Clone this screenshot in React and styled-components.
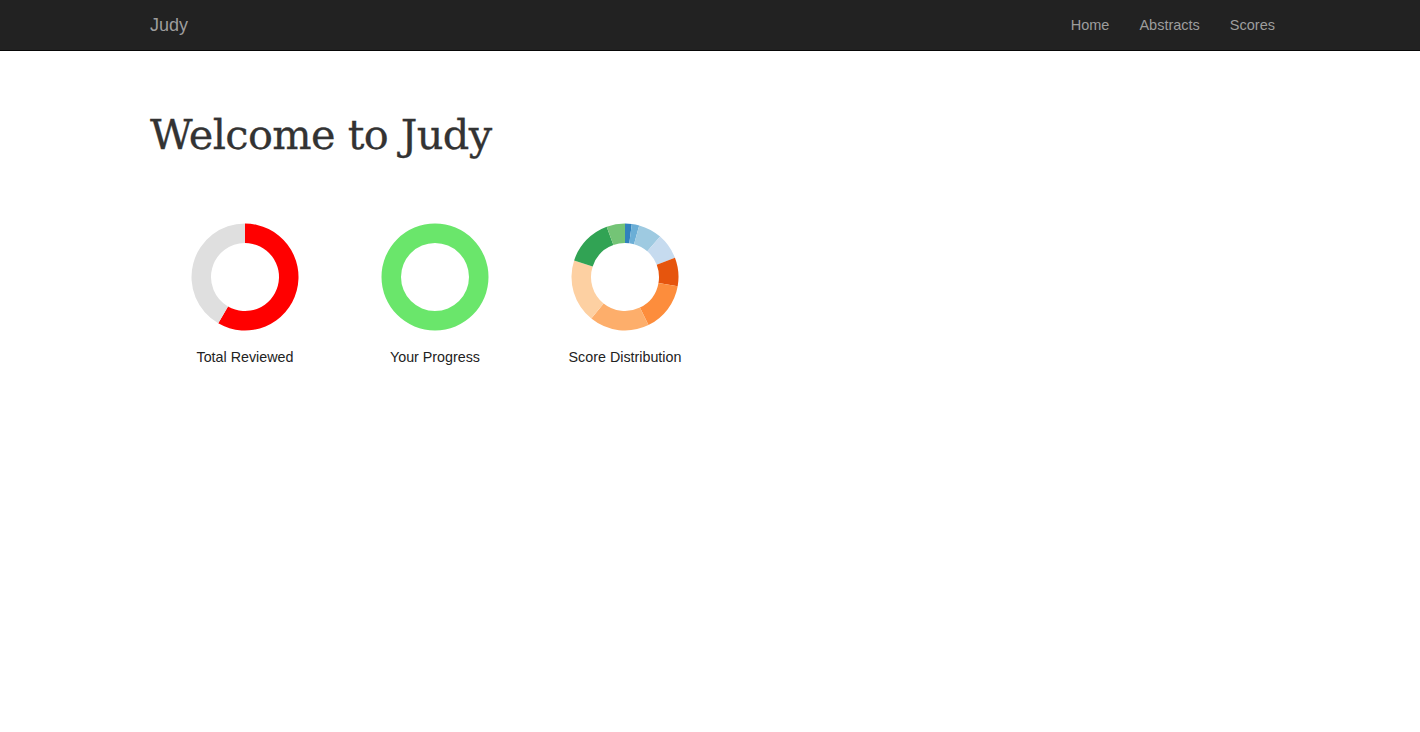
import React from "react";
import styled, { createGlobalStyle } from "styled-components";

const Global = createGlobalStyle`
  html, body { margin: 0; padding: 0; background: #fff; }
  body { font-family: "Liberation Sans", Arial, sans-serif; font-size: 14px; color: #333; }
`;

const Navbar = styled.nav`
  height: 50px;
  background: #222;
  border-bottom: 1px solid #080808;
`;

const NavInner = styled.div`
  width: 1170px;
  margin: 0 auto;
  box-sizing: border-box;
  padding: 0 5px 0 25px;
  height: 50px;
  display: flex;
  align-items: center;
  justify-content: space-between;
`;

const Brand = styled.a`
  font-size: 18px;
  color: #9d9d9d;
  text-decoration: none;
  line-height: 20px;
`;

const NavList = styled.ul`
  list-style: none;
  margin: 0;
  padding: 0;
  display: flex;
`;

const NavLink = styled.a`
  display: block;
  padding: 15px;
  line-height: 20px;
  font-size: 14.5px;
  color: #9d9d9d;
  text-decoration: none;
`;

const Container = styled.main`
  width: 1170px;
  margin: 0 auto;
  box-sizing: border-box;
  padding: 0 25px;
`;

const Title = styled.h1`
  margin: 57px 0 0;
  font-family: "DejaVu Serif", "Liberation Serif", serif;
  font-weight: normal;
  font-size: 41.5px;
  line-height: 54px;
  color: #333;
  letter-spacing: -0.6px;
  -webkit-text-stroke: 0.3px #333;
`;

const Charts = styled.div`
  display: flex;
  margin-top: 61px;
`;

const Tile = styled.figure`
  margin: 0;
  width: 190px;
  display: flex;
  flex-direction: column;
  align-items: center;
`;

const Caption = styled.figcaption`
  margin-top: 18px;
  font-size: 14.3px;
  line-height: 16px;
  color: #222;
`;

function arc(cx, cy, r0, r1, a0, a1) {
  const rad = (d) => ((d - 90) * Math.PI) / 180;
  const p = (r, a) => [cx + r * Math.cos(rad(a)), cy + r * Math.sin(rad(a))];
  const large = a1 - a0 > 180 ? 1 : 0;
  const [x1, y1] = p(r1, a0);
  const [x2, y2] = p(r1, a1);
  const [x3, y3] = p(r0, a1);
  const [x4, y4] = p(r0, a0);
  return `M${x1} ${y1} A${r1} ${r1} 0 ${large} 1 ${x2} ${y2} L${x3} ${y3} A${r0} ${r0} 0 ${large} 0 ${x4} ${y4} Z`;
}

function Donut({ segments }) {
  let start = 0;
  const total = segments.reduce((s, x) => s + x.v, 0);
  return (
    <svg width="108" height="108" viewBox="0 0 108 108">
      {segments.map((s, i) => {
        const a0 = start;
        const a1 = start + (s.v / total) * 360;
        start = a1;
        if (a1 - a0 >= 359.99) {
          return (
            <g key={i}>
              <path d={arc(54, 54, 34, 53.5, 0, 180)} fill={s.c} />
              <path d={arc(54, 54, 34, 53.5, 180, 360)} fill={s.c} />
            </g>
          );
        }
        return <path key={i} d={arc(54, 54, 34, 53.5, a0, a1)} fill={s.c} />;
      })}
    </svg>
  );
}

const reviewed = [
  { v: 210, c: "#ff0000" },
  { v: 150, c: "#dfdfdf" },
];
const progress = [{ v: 1, c: "#6ae66b" }];
const dist = [
  { v: 7.3, c: "#3182bd" },
  { v: 8.1, c: "#6baed6" },
  { v: 25.6, c: "#9ecae1" },
  { v: 28, c: "#c6dbef" },
  { v: 31, c: "#e6550d" },
  { v: 54, c: "#fd8d3c" },
  { v: 65, c: "#fdae6b" },
  { v: 69, c: "#fdd0a2" },
  { v: 52, c: "#31a354" },
  { v: 20, c: "#74c476" },
];

export default function App() {
  return (
    <>
      <Global />
      <Navbar>
        <NavInner>
          <Brand href="#">Judy</Brand>
          <NavList>
            <li><NavLink href="#">Home</NavLink></li>
            <li><NavLink href="#">Abstracts</NavLink></li>
            <li><NavLink href="#">Scores</NavLink></li>
          </NavList>
        </NavInner>
      </Navbar>
      <Container>
        <Title>Welcome to Judy</Title>
        <Charts>
          <Tile>
            <Donut segments={reviewed} />
            <Caption>Total Reviewed</Caption>
          </Tile>
          <Tile>
            <Donut segments={progress} />
            <Caption>Your Progress</Caption>
          </Tile>
          <Tile>
            <Donut segments={dist} />
            <Caption>Score Distribution</Caption>
          </Tile>
        </Charts>
      </Container>
    </>
  );
}
